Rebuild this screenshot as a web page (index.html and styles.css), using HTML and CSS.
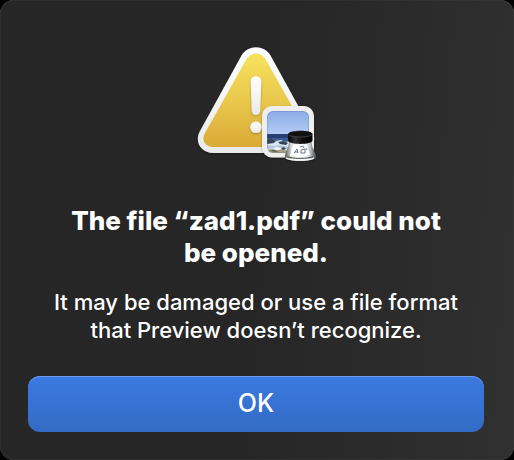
FILE: index.html
```html
<!DOCTYPE html>
<html lang="en">
<head>
<meta charset="utf-8">
<title>Preview</title>
<link rel="stylesheet" href="styles.css">
</head>
<body>
<main class="alert" role="alertdialog" aria-labelledby="alert-title" aria-describedby="alert-text">
  <svg class="alert-icon" viewBox="188 40 136 126" aria-hidden="true">
    <defs>
      <linearGradient id="yellow" x1="0" y1="0" x2="0" y2="1"><stop offset="0" stop-color="#f6e25f"/><stop offset=".5" stop-color="#e9c84b"/><stop offset="1" stop-color="#d9aa38"/></linearGradient>
      <linearGradient id="rim" x1="0" y1="0" x2="0" y2="1"><stop offset="0" stop-color="#fff"/><stop offset="1" stop-color="#e9e9e9"/></linearGradient>
      <linearGradient id="sky" x1="0" y1="0" x2="0" y2="1"><stop offset="0" stop-color="#8cabe6"/><stop offset="1" stop-color="#b3cdf4"/></linearGradient>
      <linearGradient id="cap" x1="0" y1="0" x2="1" y2="0"><stop offset="0" stop-color="#050505"/><stop offset=".3" stop-color="#303030"/><stop offset=".55" stop-color="#111"/><stop offset="1" stop-color="#000"/></linearGradient>
      <linearGradient id="glass" x1="0" y1="0" x2="1" y2="0"><stop offset="0" stop-color="#55585a"/><stop offset=".2" stop-color="#d8dada"/><stop offset=".35" stop-color="#fbfbfb"/><stop offset=".7" stop-color="#f3f4f6"/><stop offset=".85" stop-color="#b4b7b8"/><stop offset="1" stop-color="#4b4d4e"/></linearGradient>
      <filter id="shade" x="-20%" y="-20%" width="140%" height="150%"><feDropShadow dx="0" dy="1" stdDeviation="1" flood-color="#000" flood-opacity=".3"/></filter>
      <clipPath id="photo"><rect x="267" y="111" width="42" height="42" rx="6"/></clipPath>
    </defs>
    <path filter="url(#shade)" fill="url(#rim)" d="M241.500 55.500C248 44.500 264 44.500 270.500 55.500L312 131C318 142 311 153 299 153H213C201 153 194 142 200 131Z"/>
    <path fill="url(#yellow)" d="M246.500 59C250.500 51.500 261.500 51.500 265.500 59L307 133C311 140 307 147 299 147H213C205 147 201 140 205 133Z"/>
    <g filter="url(#shade)" fill="url(#rim)">
      <path d="M250.700 81C250.700 74.500 261.300 74.500 261.300 81L260.200 111C260 116.500 252 116.500 251.800 111Z"/>
      <circle cx="256" cy="127.300" r="5.800"/>
    </g>
    <rect filter="url(#shade)" x="262" y="106" width="52" height="51.500" rx="10" fill="#eeeeec"/>
    <g clip-path="url(#photo)">
      <path fill="url(#sky)" d="M267 111h42v24h-42z"/>
      <path fill="#263f75" d="M267 134h42v8h-42z"/>
      <path fill="#3d5c91" d="M267 138h42v7h-42z"/>
      <path fill="#dbe6f0" d="M267 140l5-1 4 2 5-1 4 2 6-1v12h-24z"/>
      <path fill="#35445a" d="M267 140l4-2 5 3-2 2-7 1zM278 142l5-1 5 2-2 2-6-1z"/>
      <path fill="#b4c8dc" d="M267 145l7 1 5-1 9 2v2l-11-1-10 1z"/>
      <path fill="#a79d80" d="M267 150l5-1 5 1 5-1 6 2v2h-21z"/>
      <path fill="#3f4a48" d="M270 151l4-1 4 2zM281 148l3-1 2 2-3 1z"/>
      <path fill="#f3f8fc" d="M273 148l4-1 5 2-5 1z"/>
    </g>
    <rect x="267.500" y="111.500" width="41" height="41" rx="6" fill="none" stroke="#596f99" stroke-opacity=".3"/>
    <ellipse cx="300" cy="159" rx="15" ry="3" fill="#111" fill-opacity=".6"/>
    <path fill="url(#glass)" stroke="#777" stroke-width=".6" d="M289.500 142h21.500c0 6 4.500 10 4.500 15 0 5-30.500 5-30.500 0 0-5 4.500-9 4.500-15z"/>
    <path fill="none" stroke="#44494b" d="M287.500 156.500c3 2.500 22 2.500 25.500 0"/>
    <path fill="none" stroke="#fff" stroke-width="1.200" d="M286 158c5 3 23 3 28 0"/>
    <path fill="#fff" d="M293 145h14l3 10-20 1z"/>
    <g fill="none" stroke="#52617b" stroke-opacity=".85"><path d="M294 153l3-4 1 4M295 152h3M301 150l4-1 0 4-4 0zM300 147l3-1 1 2M306 148l1 2"/></g>
    <path fill="url(#cap)" d="M288.200 134c0-4.500 24.300-4.500 24.300 0v6.500c0 4.500-24.300 4.500-24.300 0z"/>
    <ellipse cx="300.300" cy="134.200" rx="11.200" ry="2.700" fill="#111"/>
    <path fill="none" stroke="#555" stroke-width=".7" d="M289 135c3 2.700 19 2.700 22.700 0"/>
  </svg>
  <h1 class="alert-title" id="alert-title">The file “zad1.pdf” could not be opened.</h1>
  <p class="alert-text" id="alert-text">It may be damaged or use a file format that Preview doesn’t recognize.</p>
  <button class="alert-button" type="button">OK</button>
</main>
</body>
</html>
```
FILE: styles.css
```css
* {
  box-sizing: border-box;
}

body {
  margin: 0;
  background: #000;
  color: #fff;
  font-family: Inter, "Liberation Sans", sans-serif;
}

.alert {
  display: flex;
  flex-direction: column;
  align-items: center;
  min-height: 100vh;
  padding: 40px 30px 28px 28px;
  border-radius: 14px;
  background: linear-gradient(95deg, #262626 50%, #303030);
  box-shadow: inset 0 0 1px #777;
  text-align: center;
}

.alert-icon {
  width: 136px;
  height: 126px;
}

.alert-title {
  max-width: 400px;
  margin: 39px 0 0;
  font-size: 26px;
  font-weight: 800;
  line-height: 32px;
}

.alert-text {
  max-width: 420px;
  margin: 19px 0 0;
  font-size: 22px;
  font-weight: 500;
  line-height: 28px;
}

.alert-button {
  align-self: stretch;
  height: 56px;
  margin-top: 32px;
  padding: 0 0 2px;
  border: 0;
  border-radius: 12px;
  background: linear-gradient(#3b7ae2, #336bc4);
  box-shadow: inset 0 1px #6b9aea;
  color: #fff;
  font: inherit;
  font-size: 25px;
  font-weight: 500;
}
```
